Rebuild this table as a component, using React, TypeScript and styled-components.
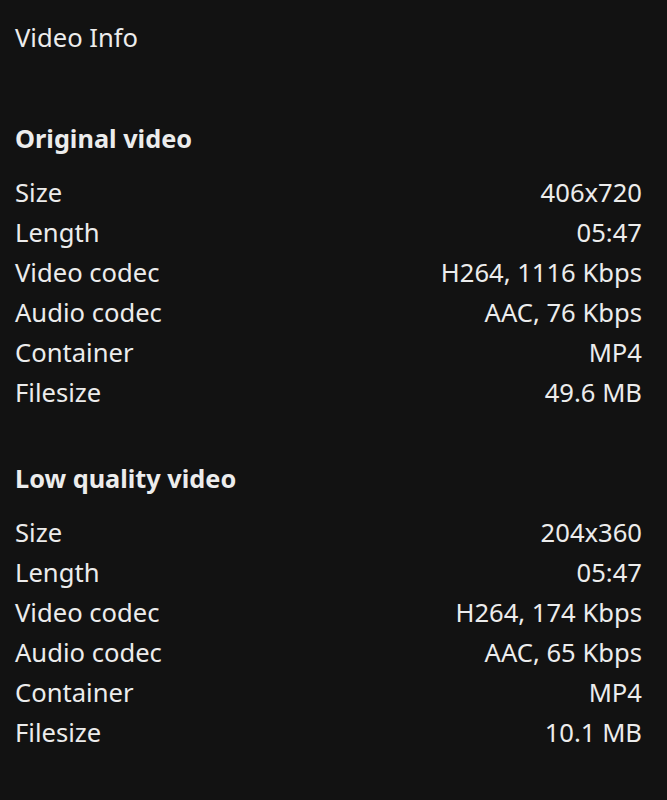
import React from "react";
import styled, { createGlobalStyle } from "styled-components";

const Global = createGlobalStyle`
  html, body { margin: 0; padding: 0; background: #121212; }
  body { font-family: "Noto Sans", "Open Sans", sans-serif; color: #ececec; }
`;

const Page = styled.div`
  padding: 18px 25px 40px 15px;
  display: flex;
  flex-direction: column;
`;

const Title = styled.div`
  font-size: 25.6px;
  line-height: 40px;
  font-weight: 400;
`;

const Section = styled.section<{ $first?: boolean }>`
  display: flex;
  flex-direction: column;
  margin-top: ${(p) => (p.$first ? "60px" : "45px")};
`;

const Heading = styled.div`
  font-size: 25.3px;
  line-height: 40px;
  font-weight: 700;
  margin-bottom: 15px;
`;

const Row = styled.div`
  display: flex;
  justify-content: space-between;
  font-size: 25.6px;
  line-height: 40px;
`;

const Label = styled.span``;
const Value = styled.span``;

type Item = [string, string];

const sections: { title: string; rows: Item[] }[] = [
  {
    title: "Original video",
    rows: [
      ["Size", "406x720"],
      ["Length", "05:47"],
      ["Video codec", "H264, 1116 Kbps"],
      ["Audio codec", "AAC, 76 Kbps"],
      ["Container", "MP4"],
      ["Filesize", "49.6 MB"],
    ],
  },
  {
    title: "Low quality video",
    rows: [
      ["Size", "204x360"],
      ["Length", "05:47"],
      ["Video codec", "H264, 174 Kbps"],
      ["Audio codec", "AAC, 65 Kbps"],
      ["Container", "MP4"],
      ["Filesize", "10.1 MB"],
    ],
  },
];

export default function App() {
  return (
    <>
      <Global />
      <Page>
        <Title>Video Info</Title>
        {sections.map((s, i) => (
          <Section key={s.title} $first={i === 0}>
            <Heading>{s.title}</Heading>
            {s.rows.map(([k, v]) => (
              <Row key={k}>
                <Label>{k}</Label>
                <Value>{v}</Value>
              </Row>
            ))}
          </Section>
        ))}
      </Page>
    </>
  );
}
